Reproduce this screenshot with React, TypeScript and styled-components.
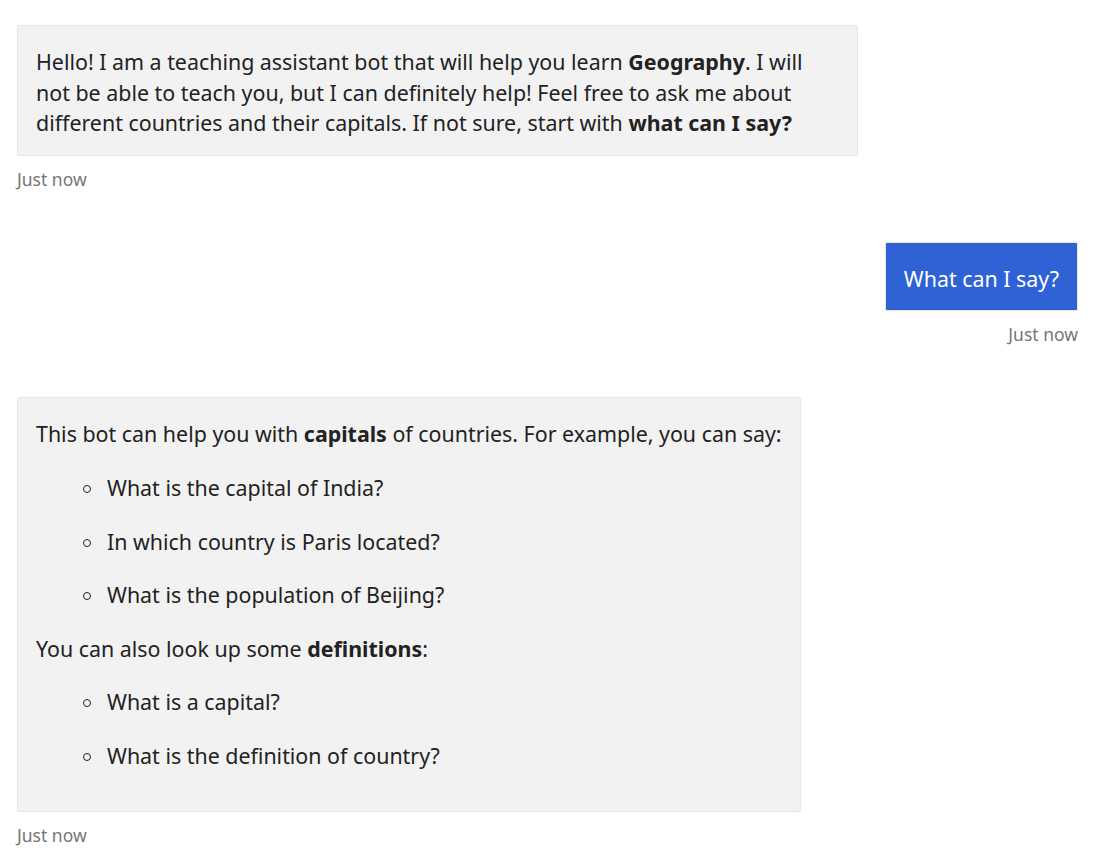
import styled, { createGlobalStyle, css } from "styled-components";

const GlobalStyle = createGlobalStyle`
  body {
    margin: 0;
    background: #ffffff;
    font-family: "Noto Sans", "Open Sans", sans-serif;
    color: #222222;
  }
`;

const Transcript = styled.div`
  display: flex;
  flex-direction: column;
  padding: 25px 29px 20px 17px;
`;

const Activity = styled.div<{ $fromUser?: boolean }>`
  display: flex;
  flex-direction: column;
  align-items: ${({ $fromUser }) => ($fromUser ? "flex-end" : "flex-start")};
  margin-bottom: 52px;

  &:last-child {
    margin-bottom: 0;
  }
`;

const Bubble = styled.div<{ $fromUser?: boolean }>`
  max-width: 841px;
  box-sizing: border-box;
  border: 1px solid #e6e6e6;
  border-radius: 2px;
  padding: 21px 18px 16px;
  font-size: 21.4px;
  line-height: 30.6px;
  ${({ $fromUser }) =>
    $fromUser
      ? css`
          background: #2e62d5;
          color: #ffffff;
        `
      : css`
          background: #f2f2f2;
          color: #222222;
        `}

  strong {
    font-weight: 700;
  }
`;

const Paragraph = styled.p<{ $spaced?: boolean }>`
  margin: 0 0 ${({ $spaced }) => ($spaced ? "23px" : "0")};
`;

const List = styled.ul`
  list-style: none;
  margin: 0;
  padding: 0 0 0 71px;
`;

const ListItem = styled.li`
  position: relative;
  margin-bottom: 23px;

  &::before {
    content: "";
    position: absolute;
    left: -24px;
    top: 12px;
    width: 6px;
    height: 6px;
    border: 1px solid #222222;
    border-radius: 50%;
  }
`;

const Timestamp = styled.div`
  margin-top: 13px;
  font-size: 17.5px;
  line-height: 21px;
  color: #767676;
`;

const capitals = [
  "What is the capital of India?",
  "In which country is Paris located?",
  "What is the population of Beijing?",
];

const definitions = ["What is a capital?", "What is the definition of country?"];

export default function App() {
  return (
    <>
      <GlobalStyle />
      <Transcript>
        <Activity>
          <Bubble>
            <Paragraph>
              Hello! I am a teaching assistant bot that will help you learn{" "}
              <strong>Geography</strong>. I will not be able to teach you, but I
              can definitely help! Feel free to ask me about different countries
              and their capitals. If not sure, start with{" "}
              <strong>what can I say?</strong>
            </Paragraph>
          </Bubble>
          <Timestamp>Just now</Timestamp>
        </Activity>

        <Activity $fromUser>
          <Bubble $fromUser>What can I say?</Bubble>
          <Timestamp>Just now</Timestamp>
        </Activity>

        <Activity>
          <Bubble>
            <Paragraph $spaced>
              This bot can help you with <strong>capitals</strong> of countries.
              For example, you can say:
            </Paragraph>
            <List>
              {capitals.map((text) => (
                <ListItem key={text}>{text}</ListItem>
              ))}
            </List>
            <Paragraph $spaced>
              You can also look up some <strong>definitions</strong>:
            </Paragraph>
            <List>
              {definitions.map((text) => (
                <ListItem key={text}>{text}</ListItem>
              ))}
            </List>
          </Bubble>
          <Timestamp>Just now</Timestamp>
        </Activity>
      </Transcript>
    </>
  );
}
